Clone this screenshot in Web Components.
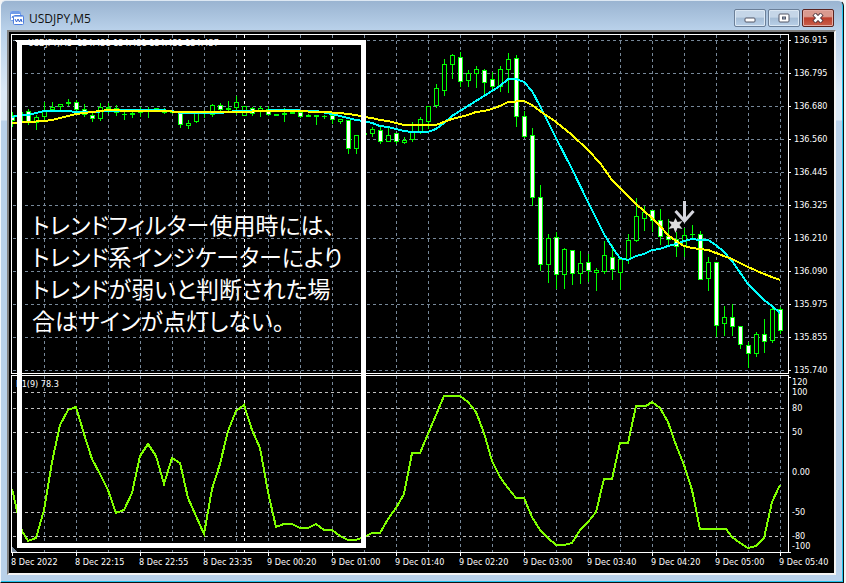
<!DOCTYPE html>
<html lang="ja">
<head>
<meta charset="utf-8">
<title>USDJPY,M5</title>
<style>
body {
    margin: 0;
    background: #f4f4f4;
    font-family: "DejaVu Sans Condensed", "DejaVu Sans", sans-serif;
    font-stretch: condensed;
    font-size: 9px;
    color: white;
}
</style>
</head>
<body>

<chart-window>
    <span slot="title">USDJPY,M5</span>
    <chart-plot kind="price">
        <span slot="caption">USDJPY,M5&nbsp; 134.431 134.431 134.431 134.437</span>
    </chart-plot>
    <value-axis kind="price" values="136.915 136.795 136.680 136.560 136.445 136.325 136.210 136.090 135.975 135.855 135.740"></value-axis>
    <chart-plot kind="oscillator">
        <span slot="caption">R1(9) 78.3</span>
    </chart-plot>
    <value-axis kind="oscillator" values="120 100 80 50 0.00 -50 -80 -100"></value-axis>
    <time-axis values="8 Dec 2022,8 Dec 22:15,8 Dec 22:55,8 Dec 23:35,9 Dec 00:20,9 Dec 01:00,9 Dec 01:40,9 Dec 02:20,9 Dec 03:00,9 Dec 03:40,9 Dec 04:20,9 Dec 05:00,9 Dec 05:40"></time-axis>
    <chart-note>トレンドフィルター使用時には、<br>トレンド系インジケーターにより<br>トレンドが弱いと判断された場<br>合はサインが点灯しない。</chart-note>
</chart-window>

<script>
// window frame, title bar and the grid that holds the panels
let windowTemplate = document.createElement("template");
windowTemplate.innerHTML =
  /*html*/
  `
<style>
:host {
    display: flex;
    flex-direction: column;
    box-sizing: border-box;
    height: 100vh;
    min-height: 480px;
    margin-right: 2px;
    padding: 0 7px 7px 6px;
    border: 1px solid #111;
    border-left-color: #f2f7fc;
    border-top-color: #dde8f3;
    border-radius: 6px 6px 0 0;
    box-shadow: inset -1px -1px #22c4ee;
    background:
        linear-gradient(#9ab4d1, #b9d1ea 29px, #dce9f6 90px, #dce9f6 119px, #b9d1ea 120px);
}

header {
    display: flex;
    align-items: center;
    flex: 0 0 29px;
    gap: 4px;
    padding: 5px 1px 0 3px;
    box-sizing: border-box;
    font: 12px "Open Sans", "Noto Sans", sans-serif;
    color: #111;
}

.icon {
    width: 15px;
    height: 15px;
}

h1 {
    flex: 1;
    margin: 0;
    font: inherit;
}

.buttons {
    display: flex;
    gap: 2px;
    padding-right: 1px;
}

button {
    display: grid;
    place-items: center;
    width: 32px;
    height: 18px;
    padding: 0;
    border: 1px solid #6b7f98;
    border-radius: 2px;
    box-shadow: inset 0 0 0 1px #dce8f4;
    background: linear-gradient(#c5d6e8 45%, #a5bdd6 50%, #b9d0e8);
}

button.close {
    border-color: #5b2420;
    box-shadow: inset 0 0 0 1px #e4aaa2;
    background: linear-gradient(#d99a8f 40%, #bd3e2c 50%, #c8604c);
}

main {
    position: relative;
    flex: 1;
    min-height: 0;
    display: grid;
    grid-template-columns: minmax(0, 1fr) 45px;
    grid-template-rows: minmax(0, 1fr) 178px 19px;
    row-gap: 1px;
    padding: 2px 0 0 2px;
    border: 2px solid;
    border-color: #808080 #f4f4f4 #f4f4f4 #808080;
    background: black;
}
</style>
<header>
    <svg class="icon" viewBox="0 0 15 15" aria-hidden="true">
        <rect x="0.5" y="0.5" width="10" height="9" rx="1" fill="#fff" stroke="#6f9be8"/>
        <path d="M1 2h9" stroke="#6f9be8" stroke-width="2"/>
        <path d="M2 7l1-2 1 2 1-2" fill="none" stroke="#3b6fd8"/>
        <rect x="3.5" y="4.5" width="10" height="9" rx="1" fill="#fff" stroke="#4f80df"/>
        <path d="M4 5.5h9" stroke="#8fb2f0"/>
        <path d="M5 8l1.500 3L8 8l1.500 3L11 8l1 3" fill="none" stroke="#2f62d0"/>
    </svg>
    <h1><slot name="title"></slot></h1>
    <div class="buttons">
        <button type="button" aria-label="Minimize">
            <svg width="12" height="10"><rect x="1" y="5" width="10" height="4" rx="1" fill="#fff" stroke="#535666"/></svg>
        </button>
        <button type="button" aria-label="Maximize">
            <svg width="12" height="10"><rect x="1" y="1" width="10" height="8" rx="1" fill="#fff" stroke="#535666"/><rect x="4.500" y="4" width="3" height="2" fill="#9db6d0" stroke="#535666"/></svg>
        </button>
        <button type="button" class="close" aria-label="Close">
            <svg width="12" height="10"><path d="M2 1L10 9M10 1L2 9" stroke="#53383f" stroke-width="4.500"/><path d="M2.500 1.500L9.500 8.500M9.500 1.500L2.500 8.500" stroke="#fff" stroke-width="2.500"/></svg>
        </button>
    </div>
</header>
<main><slot></slot></main>
`;

class ChartWindow extends HTMLElement {
  constructor() {
    super();
    this.attachShadow({ mode: "open" });
    this.shadowRoot.appendChild(windowTemplate.content.cloneNode(true));
  }
}

// one bar every 8 units from x = 12: high, body top, body bottom, low, filled
const bars = [
  [112, 115, 120, 126, 1], [112, 112, 121, 121, 0], [109, 111, 121, 124, 1], [115, 117, 122, 129, 0],
  [102, 111, 116, 121, 0], [102, 107, 109, 110, 0], [104, 104, 106, 111, 0], [99, 102, 103, 105, 0],
  [100, 102, 109, 111, 1], [104, 109, 114, 116, 1], [113, 115, 118, 121, 1], [103, 107, 118, 120, 0],
  [103, 107, 108, 113, 0], [105, 108, 112, 115, 1], [111, 114, 114, 119, 0], [110, 113, 114, 117, 0],
  [107, 110, 112, 116, 0], [107, 110, 111, 117, 0], [108, 108, 110, 111, 0], [108, 111, 112, 113, 0],
  [111, 112, 112, 113, 0], [111, 112, 124, 127, 1], [120, 123, 125, 128, 0], [113, 113, 121, 122, 0],
  [110, 111, 112, 117, 0],
  [104, 105, 114, 116, 0], [103, 105, 109, 111, 1], [101, 108, 109, 110, 0], [96, 102, 107, 114, 0],
  [106, 106, 115, 115, 0], [107, 108, 113, 115, 1], [106, 108, 111, 116, 0], [106, 109, 114, 115, 1],
  [114, 114, 115, 115, 0], [108, 113, 114, 121, 0], [111, 112, 113, 113, 0], [111, 112, 116, 117, 1],
  [114, 115, 116, 116, 0], [115, 115, 116, 124, 0], [115, 116, 116, 118, 0], [114, 115, 119, 123, 1],
  [119, 119, 121, 123, 0], [120, 120, 148, 153, 1], [135, 135, 148, 153, 0], [132, 133, 134, 135, 0],
  [127, 129, 133, 136, 0], [126, 130, 141, 143, 1], [128, 135, 141, 141, 0], [133, 133, 141, 143, 1],
  [137, 140, 142, 143, 0], [122, 132, 139, 141, 0], [117, 119, 132, 133, 0], [106, 106, 121, 128, 0],
  [84, 88, 105, 107, 0], [59, 64, 90, 95, 0], [54, 55, 64, 78, 0], [52, 57, 81, 86, 1],
  [70, 73, 80, 86, 0], [66, 69, 73, 87, 0], [69, 70, 82, 96, 1], [72, 79, 86, 91, 1],
  [66, 69, 86, 91, 0], [53, 59, 69, 92, 0], [55, 58, 116, 126, 1], [111, 116, 136, 137, 1],
  [128, 135, 197, 205, 1], [185, 197, 264, 270, 1], [234, 238, 264, 282, 0], [232, 237, 274, 288, 1],
  [248, 249, 274, 288, 0], [250, 250, 273, 284, 1], [251, 263, 273, 283, 0], [254, 262, 270, 281, 1],
  [268, 270, 272, 290, 0], [241, 255, 271, 273, 0], [245, 257, 269, 279, 1], [259, 259, 272, 289, 0],
  [234, 240, 259, 263, 0], [198, 216, 240, 241, 0], [206, 212, 218, 230, 0], [210, 210, 220, 231, 1],
  [209, 220, 236, 244, 1], [219, 236, 239, 245, 1], [232, 239, 246, 256, 1], [228, 235, 245, 256, 0],
  [225, 234, 234, 239, 0], [231, 234, 279, 279, 1], [257, 262, 278, 290, 0], [262, 262, 325, 336, 1],
  [306, 317, 323, 335, 0], [304, 317, 326, 335, 1], [326, 326, 344, 348, 1], [342, 345, 353, 367, 1],
  [332, 334, 353, 356, 0], [319, 334, 341, 352, 1], [305, 309, 340, 342, 0], [307, 309, 330, 333, 1]
];

const fastAverage = "12,117 20,115 28,115 36,113 44,111 68,111 76,112 92,112 108,111 116,111 125,110 160,110 172,111 180,113 220,113 236,111 252,111 284,110 316,111 332,114 340,116 348,118 356,120 364,121 372,123 380,126 388,127 396,129 404,131 412,132 428,132 436,129 444,123 452,116 460,111 468,106 476,101 484,96 492,91 500,86 508,79 516,79 524,82 532,91 540,106 556,138 572,169 588,202 604,234 612,247 620,258 628,260 636,256 644,254 652,250 660,249 668,246 676,244 684,241 692,239 700,240 708,240 716,245 724,252 732,261 748,284 764,300 772,306 780,313";
const slowAverage = "12,123 28,122 44,121 52,120 60,118 68,116 76,114 84,113 100,111 108,110 116,110 124,111 164,111 180,112 244,112 260,111 292,111 324,112 340,113 348,114 356,115 364,117 372,118 380,120 388,121 396,123 404,125 436,125 444,122 452,119 460,117 468,115 476,112 484,111 492,109 500,106 508,102 524,101 532,105 540,111 556,122 572,135 588,150 600,163 612,180 620,188 636,204 652,218 660,226 668,235 676,241 684,246 692,248 700,249 708,250 732,259 748,267 764,274 780,280";
const oscillator = "12,489 16,506 20,525 22,531 28,541 36,538 44,510 52,462 60,425 68,410 76,407 84,434 92,459 100,474 108,490 116,513 124,510 132,493 140,456 148,444 156,456 164,484 172,458 180,463 188,498 204,534 212,489 220,464 228,431 236,411 244,405 252,430 260,448 268,492 276,527 284,524 292,524 300,528 308,528 316,524 324,530 332,530 340,536 348,540 356,540 366,536 372,533 380,533 388,519 396,508 404,494 412,453 420,453 428,434 436,415 444,396 460,396 468,402 476,412 484,433 492,461 500,477 508,488 516,498 524,498 532,517 540,530 548,538 556,545 564,545 572,543 580,530 588,522 596,512 604,479 612,479 620,443 628,443 636,406 646,406 652,402 660,408 668,422 676,445 684,465 692,490 700,529 726,529 732,537 740,543 748,548 756,546 764,538 772,502 780,485";

function gridLines(top, bottom, rows) {
  let out = "";
  for (let x = 44; x < 788; x += 32) {
    out += `<path class="grid" d="M${x}.5 ${top}V${bottom}"/>`;
  }
  out += `<path class="day" d="M244.5 ${top}V${bottom}"/>`;
  for (const [y, kind] of rows) {
    out += `<path class="${kind}" d="M13 ${y}.5H786"/>`;
  }
  return out;
}

function candles() {
  return bars.map(([high, top, bottom, low, filled], i) => {
    const x = 12 + i * 8;
    const height = bottom - top + 1;
    let out = `<rect class="up" x="${x}" y="${high}" width="1" height="${low - high + 1}"/>`;
    out += `<rect class="up" x="${x - 2}" y="${top}" width="5" height="${height}"/>`;
    if (height > 2) {
      out += `<rect fill="${filled ? "#fff" : "#000"}" x="${x - 1}" y="${top + 1}" width="3" height="${height - 2}"/>`;
    }
    return out;
  }).join("");
}

class ChartPlot extends HTMLElement {
  constructor() {
    super();
    this.attachShadow({ mode: "open" });
  }
  connectedCallback() {
    const price = this.getAttribute("kind") === "price";
    let drawing;
    if (price) {
      const rows = [];
      for (let y = 40; y < 373; y += 33) rows.push([y, "grid"]);
      drawing = gridLines(35, 373, rows) + candles() + `
        <polyline stroke="#0ff" points="${fastAverage}"/>
        <polyline stroke="#ff0" points="${slowAverage}"/>
        <path fill="#fff" d="M14 40h5v4z"/>
        <g class="signal">
            <path d="M684.5 201V221M675.500 211L684.500 221L693.500 211" fill="none" stroke="#d6d6de" stroke-width="3"/>
            <path fill="#dcdcdc" d="M675.500 218l2 4 5-1-3 4 3 4-5-1-2 5-2-5-5 1 3-4-3-4 5 1z"/>
        </g>`;
    } else {
      drawing = gridLines(376, 552, [[392, "level"], [408, "level"], [432, "level"], [472, "grid"], [512, "level"], [536, "level"]]) + `
        <polyline stroke="#7fff00" points="${oscillator}"/>
        <path fill="#778899" d="M12 547l5 5h-5z"/>`;
    }
    this.shadowRoot.innerHTML =
      /*html*/
      `
<style>
:host {
    display: grid;
    grid-template: minmax(0, 1fr) / minmax(0, 1fr);
    border: 1px solid white;
    min-height: 0;
    min-width: 0;
}

svg, .caption {
    grid-area: 1 / 1;
}

svg {
    width: 100%;
    height: 100%;
    min-height: 0;
    shape-rendering: crispEdges;
}

.signal {
    shape-rendering: auto;
}

.caption {
    padding: 2px 4px;
    line-height: 12px;
    justify-self: start;
    align-self: start;
}

.price {
    padding-left: 16px;
}

.grid, .level, .day {
    fill: none;
    stroke: #778899;
    stroke-dasharray: 3 3;
}

.level {
    stroke: #c0c0c0;
}

.day {
    stroke: white;
}

.up {
    fill: #0f0;
}

polyline {
    fill: none;
    stroke-width: 2;
}
</style>
<svg viewBox="${price ? "12 35 776 338" : "12 376 776 176"}" preserveAspectRatio="none" aria-hidden="true">${drawing}</svg>
<div class="caption ${price ? "price" : ""}"><slot name="caption"></slot></div>
`;
  }
}

class ValueAxis extends HTMLElement {
  constructor() {
    super();
    this.attachShadow({ mode: "open" });
  }
  connectedCallback() {
    const items = this.getAttribute("values").split(" ");
    this.shadowRoot.innerHTML =
      /*html*/
      `
<style>
:host {
    display: grid;
    grid-template-rows: minmax(0, 1fr);
    min-height: 0;
}

ul {
    margin: 0;
    padding: 0;
    list-style: none;
    line-height: 12px;
}

:host([kind="price"]) ul {
    display: flex;
    flex-direction: column;
    justify-content: space-between;
    margin-bottom: -2px;
}

:host([kind="price"]) li {
    display: flex;
    align-items: center;
    gap: 3px;
}

:host([kind="price"]) li::before {
    content: "";
    width: 2px;
    height: 1px;
    background: white;
}

:host([kind="oscillator"]) ul {
    display: grid;
    grid-template-rows:
        minmax(0, 10fr) minmax(0, 16fr) minmax(0, 24fr) minmax(0, 40fr)
        minmax(0, 40fr) minmax(0, 24fr) minmax(0, 10fr) 12px;
    padding: 1px 0 1px 3px;
    background:
        linear-gradient(white, white) 0 2px / 2px 1px no-repeat,
        linear-gradient(white, white) 0 100% / 2px 1px no-repeat;
}

:host([kind="oscillator"]) li {
    min-height: 0;
}
</style>
<ul>${items.map((v) => `<li>${v}</li>`).join("")}</ul>
`;
  }
}

class TimeAxis extends HTMLElement {
  constructor() {
    super();
    this.attachShadow({ mode: "open" });
  }
  connectedCallback() {
    const items = this.getAttribute("values").split(",");
    this.shadowRoot.innerHTML =
      /*html*/
      `
<style>
:host {
    display: block;
    grid-column: 1 / -1;
    margin-top: -1px;
}

ol {
    display: grid;
    grid-template-columns: repeat(12, minmax(0, 1fr)) 55px;
    margin: 0;
    padding: 0;
    list-style: none;
    line-height: 12px;
    white-space: nowrap;
}

li::before {
    content: "";
    display: block;
    width: 1px;
    height: 3px;
    margin-left: 1px;
    background: white;
}
</style>
<ol>${items.map((v) => `<li>${v}</li>`).join("")}</ol>
`;
  }
}

// framed remark lying over both panels
let noteTemplate = document.createElement("template");
noteTemplate.innerHTML =
  /*html*/
  `
<style>
:host {
    position: absolute;
    top: 8px;
    bottom: 25px;
    left: 8px;
    width: 349px;
    box-sizing: border-box;
    border: 5px solid white;
    padding: 163px 0 0 10px;
    font: 23px/32px "Noto Sans CJK JP", sans-serif;
    font-feature-settings: "palt";
    white-space: nowrap;
}
</style>
<slot></slot>
`;

class ChartNote extends HTMLElement {
  constructor() {
    super();
    this.attachShadow({ mode: "open" });
    this.shadowRoot.appendChild(noteTemplate.content.cloneNode(true));
  }
}

customElements.define("chart-window", ChartWindow);
customElements.define("chart-plot", ChartPlot);
customElements.define("value-axis", ValueAxis);
customElements.define("time-axis", TimeAxis);
customElements.define("chart-note", ChartNote);
</script>
</body>
</html>
